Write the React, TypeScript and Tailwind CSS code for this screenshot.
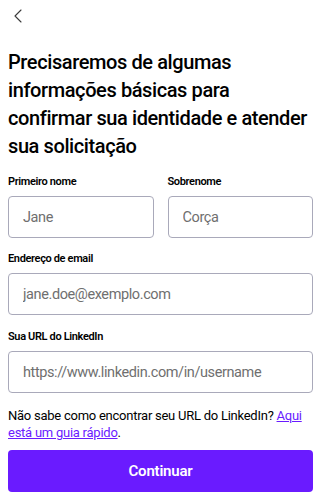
const font = { fontFamily: "Roboto, 'Liberation Sans', Arial, sans-serif" };

function Field({ label, placeholder, className = "" }: { label: string; placeholder: string; className?: string }) {
  return (
    <div className={`flex flex-col ${className}`}>
      <label className="text-[11px] leading-[14px] font-semibold tracking-[-0.35px] text-black">{label}</label>
      <input
        placeholder={placeholder}
        className="mt-[7px] h-[42px] w-full rounded-[4px] border border-[#a9a9ba] px-[14px] text-[14.5px] tracking-[-0.4px] text-black placeholder:text-[#6f6f6f] outline-none"
      />
    </div>
  );
}

export default function App() {
  return (
    <div className="min-h-[500px] w-full bg-white px-2 text-black" style={font}>
      {/* Back */}
      <div className="h-[48px] pt-[9px]">
        <svg width="8" height="14" viewBox="0 0 8 14" className="ml-[6px]" fill="none">
          <path d="M7 1 1 7l6 6" stroke="#3a3a3a" strokeWidth="1.1" strokeLinecap="round" strokeLinejoin="round" />
        </svg>
      </div>

      {/* Heading */}
      <h1 className="text-[20px] leading-[28px] font-medium tracking-[-0.4px]">
        Precisaremos de algumas informações básicas para confirmar sua identidade e atender sua solicitação
      </h1>

      {/* Form */}
      <div className="mt-[15px] flex gap-[14px]">
        <Field label="Primeiro nome" placeholder="Jane" className="flex-1" />
        <Field label="Sobrenome" placeholder="Corça" className="flex-1" />
      </div>

      <Field label="Endereço de email" placeholder="jane.doe@exemplo.com" className="mt-[14px]" />
      <Field label="Sua URL do LinkedIn" placeholder="https://www.linkedin.com/in/username" className="mt-[15px]" />

      <p className="mt-[14px] text-[13px] leading-[17px] tracking-[-0.25px]">
        Não sabe como encontrar seu URL do LinkedIn?{" "}
        <a href="#" className="text-[#6a1bff] underline">
          <span>Aqui</span> <span>está um guia rápido</span>
        </a>
        .
      </p>

      <button className="mt-[9px] h-[42px] w-full rounded-[4px] bg-[#6a1bff] text-[15px] font-semibold tracking-[-0.2px] text-white">
        Continuar
      </button>
    </div>
  );
}
